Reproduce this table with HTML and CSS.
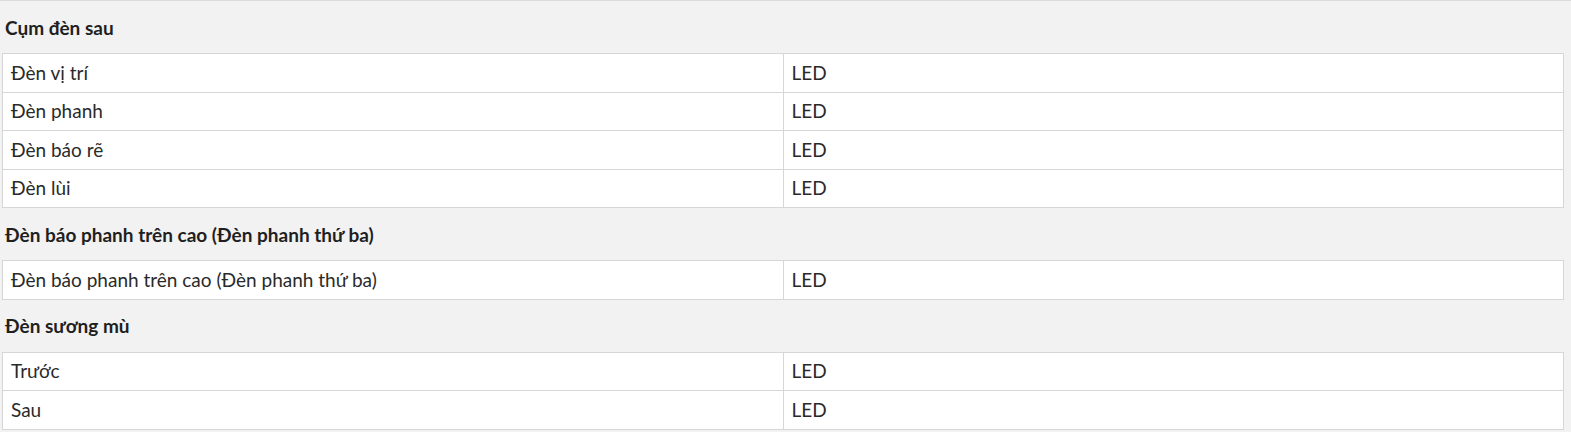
FILE: index.html
```html
<!DOCTYPE html>
<html lang="vi">
<head>
<meta charset="utf-8">
<link rel="stylesheet" href="styles.css">
</head>
<body>
<div class="page">
  <section class="group">
    <h3 class="group-title">Cụm đèn sau</h3>
    <table class="spec">
      <tr><td>Đèn vị trí</td><td>LED</td></tr>
      <tr><td>Đèn phanh</td><td>LED</td></tr>
      <tr><td>Đèn báo rẽ</td><td>LED</td></tr>
      <tr><td>Đèn lùi</td><td>LED</td></tr>
    </table>
  </section>
  <section class="group">
    <h3 class="group-title">Đèn báo phanh trên cao (Đèn phanh thứ ba)</h3>
    <table class="spec">
      <tr><td>Đèn báo phanh trên cao (Đèn phanh thứ ba)</td><td>LED</td></tr>
    </table>
  </section>
  <section class="group">
    <h3 class="group-title">Đèn sương mù</h3>
    <table class="spec">
      <tr><td>Trước</td><td>LED</td></tr>
      <tr><td>Sau</td><td>LED</td></tr>
    </table>
  </section>
</div>
</body>
</html>
```

FILE: styles.css
```css
html, body {
  margin: 0;
  padding: 0;
  background: #f2f2f2;
}
body {
  font-family: Lato, "Open Sans", "Liberation Sans", sans-serif;
  color: #2a2a2a;
  font-size: 19px;
}
.page {
  border-top: 1px solid #dcdcdc;
  padding: 0 7px 0 2px;
}
.group-title {
  margin: 0;
  height: 52px;
  display: flex;
  align-items: center;
  padding-left: 3px;
  font-size: 19px;
  font-weight: 700;
  color: #1f1f1f;
}
.spec {
  width: 100%;
  border-collapse: collapse;
  background: #fff;
  table-layout: fixed;
}
.spec td {
  border: 1px solid #d6d6d6;
  height: 38.5px;
  padding: 0 8px;
  box-sizing: border-box;
  vertical-align: middle;
  line-height: 20px;
}
.spec td:first-child {
  width: 50%;
}
```
